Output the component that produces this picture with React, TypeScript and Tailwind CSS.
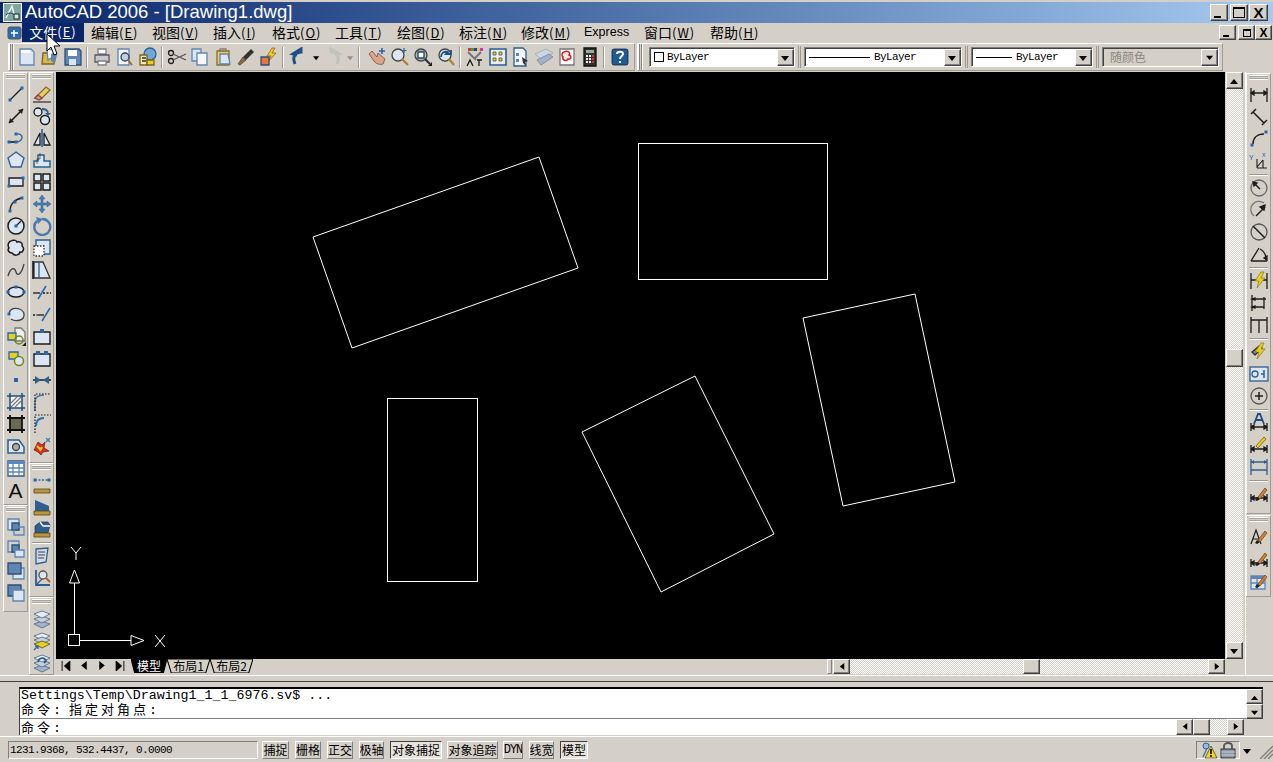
import React from "react";

const B = "#2a66a8", D = "#1c1c1c", S = "#5f86b3", L = "#dbe6f2", Y = "#e6cf1e", G = "#808080";

function I({ children, s = 20 }: { children: React.ReactNode; s?: number }) {
  return (
    <svg width={s} height={s} viewBox="0 0 20 20" fill="none" strokeWidth="1.3" stroke={D} className="block">
      {children}
    </svg>
  );
}
const N = ({ x, y, c = B }: { x: number; y: number; c?: string }) => <rect x={x - 1.5} y={y - 1.5} width="3" height="3" fill={c} stroke="none" />;
const Dim = () => <path d="M2 10v8M18 10v8M2 14h16M2 14l3-2v4zM18 14l-3-2v4z" fill={D} />;
const Brush = () => <g><path d="M9 13l7-9 2 2-7 9z" fill="#c8813a" stroke="#7a4a20" strokeWidth=".8" /><path d="M8 13l3 2-3 2-2-1z" fill={D} stroke="none" /></g>;
const Bolt = () => <path d="M12 1l-6 9h4l-2 7 8-10h-4l3-6z" fill={Y} stroke="#8a7a10" strokeWidth=".7" />;
const Stack = ({ y = 0 }: { y?: number }) => <g stroke="#5a6f8a" strokeWidth=".9"><path d={`M10 ${12 + y}l8 3-8 4-8-4z`} fill="#9fb4cc" /><path d={`M10 ${7 + y}l8 3-8 4-8-4z`} fill="#c3d0e0" /><path d={`M10 ${2 + y}l8 3-8 4-8-4z`} fill="#e6ecf4" /></g>;

const top1 = [
  <I><path d="M3 2h11l3 3v13H3z" fill={L} stroke={S} /><path d="M4 3h9v3H4z" fill="#fff" stroke="none" /></I>,
  <I><path d="M3 6h13l-2 11H2z" fill="#d9b64a" stroke="#7a6420" /><path d="M7 2l8 1-1 6-6 4z" fill="#fff" stroke={S} /><path d="M11 7l5-3 1 4-2 8-4-2z" fill={S} stroke="none" /></I>,
  <I><path d="M2 2h14l2 2v14H2z" fill={S} stroke="#2d4f78" /><path d="M5 3h9v6H5z" fill="#fff" stroke="none" /><path d="M6 12h7v6H6z" fill={L} stroke="none" /></I>,
];
const top2 = [
  <I><path d="M6 2h8v5H6z" fill="#fff" stroke={G} /><path d="M3 8h14v7H3z" fill="#c9c9cf" stroke="#5a5a60" /><path d="M6 14h8v4H6z" fill="#fff" stroke={G} /></I>,
  <I><path d="M3 2h11v16H3z" fill="#f2f5fa" stroke={S} /><circle cx="10" cy="10" r="4" fill="#bcd0e6" stroke="#345" /><path d="M13 13l4 5" strokeWidth="2" stroke="#a06a30" /></I>,
  <I><circle cx="12" cy="7" r="6" fill="#6fa8d8" stroke="#2d5f90" /><path d="M2 8h7v10H2z" fill="#f4e9a8" stroke="#7a6420" /><path d="M4 11h4M4 14h4" stroke="#333" /><path d="M9 13h7v5H9z" fill="#e6cf1e" stroke="#7a6420" /></I>,
];
const top3 = [
  <I><circle cx="4" cy="6" r="2.5" /><circle cx="4" cy="14" r="2.5" /><path d="M6 7l13 6M6 13l13-6" stroke="#555" /></I>,
  <I><path d="M2 2h9v12H2z" fill={L} stroke={S} /><path d="M7 6h10v12H7z" fill="#f4f8fc" stroke={S} /></I>,
  <I><path d="M7 2h6v3H7z" fill="#ddd" stroke={G} /><path d="M4 4h12v14H4z" fill="#e6cf6a" stroke="#8a6a20" /><path d="M7 7h8l2 10H7z" fill={L} stroke={S} /></I>,
  <I><path d="M15 2l3 3-8 8-3-3z" fill="#333" stroke="none" /><path d="M7 10l3 3-6 5-2-1z" fill="#8a6a4a" stroke="#442" strokeWidth=".7" /></I>,
  <I><path d="M13 1l-5 8h4l-3 6 8-9h-4l3-5z" fill={Y} stroke="#a05010" strokeWidth=".7" /><path d="M2 10h8v8H2z" fill="#e8763a" stroke="#2a4f80" /></I>,
];
const top4 = [
  <I><path d="M6 17C3 10 6 5 12 5V2l-8 5 4 1" fill="none" stroke="#1d4f86" strokeWidth="3" /></I>,
];
const top5 = [
  <I><path d="M14 17c3-7 0-12-6-12V2l8 5-4 1" fill="none" stroke="#c2c2bc" strokeWidth="3" /></I>,
];
const top6 = [
  <I><path d="M2 7l5 7c2 3 6 4 9 3l2-5-7-6-1 4-5-6z" fill="#d9a58c" stroke="#7a4a3a" strokeWidth=".8" /><path d="M15 1v6M12 4h6" stroke={B} strokeWidth="1.6" /></I>,
  <I><circle cx="8" cy="8" r="6" fill="#dbe6f2" stroke="#444" /><path d="M12 12l6 6" stroke="#b08030" strokeWidth="2.2" /><path d="M14 1v5M11.500 3.500h5" stroke={B} strokeWidth="1.2" /></I>,
  <I><circle cx="8" cy="8" r="6" fill="#9db8d6" stroke="#444" /><path d="M5 5h6v6H5z" fill="#fff" stroke="#345" /><path d="M12 12l5 5" stroke="#333" strokeWidth="2.2" /><path d="M19 19h-4l4-4z" fill={D} stroke="none" /></I>,
  <I><circle cx="9" cy="8" r="6" fill="#dbe6f2" stroke="#444" /><path d="M5 10c0-4 3-6 7-5l-2 2h5v-4" stroke="#1d4f86" strokeWidth="1.800" /><path d="M13 12l5 6" stroke="#b08030" strokeWidth="2.2" /></I>,
];
const top7 = [
  <I><path d="M3 1h3v3H3z" fill="#d33" stroke="none" /><path d="M6 1h3v3H6z" fill="#3a3" stroke="none" /><path d="M9 1h3v3H9z" fill="#33c" stroke="none" /><path d="M12 1h3v3h-3z" fill="#dc3" stroke="none" /><path d="M15 1h3v3h-3z" fill="#c3c" stroke="none" /><path d="M3 5l8 8M16 5l-7 7" stroke="#777" strokeWidth="2" /><path d="M2 19l3-6 3 6M12 13h5M14 13v6" strokeWidth="1.3" /></I>,
  <I><path d="M2 2h16v16H2z" fill="#e6edf5" stroke="#2d5f90" strokeWidth="1.6" /><path d="M5 5h3v3H5zM11 5h3v3h-3zM5 11h3v3H5zM11 11h3v3h-3z" fill="#e6cf1e" stroke="#444" strokeWidth=".7" /></I>,
  <I><path d="M3 1h9l3 3v15H3z" fill="#f2f6fb" stroke="#2d5f90" /><path d="M5 6h3v3H5zM5 12h3v3H5z" fill={S} stroke="none" /><path d="M11 10l6 4-3 1 1 4-3-3z" fill="#333" stroke="none" /></I>,
  <I><path d="M1 7l11-5 7 4-12 6z" fill="#cdd7e3" stroke="#8aa" strokeWidth=".7" /><path d="M3 13l12-6 4 3-12 8z" fill="#9fb4cc" stroke="#778" strokeWidth=".7" /></I>,
  <I><path d="M3 2h14v16H3z" fill="#fff" stroke="#777" /><path d="M7 5c4-2 7 1 5 3 3 1 2 5-1 4-2 3-6 1-5-2-2-1-1-5 1-5z" fill="#fbe8e4" stroke="#d02020" strokeWidth="1.500" /></I>,
  <I><path d="M4 1h12v18H4z" fill="#333" stroke="#111" /><path d="M6 3h8v3H6z" fill="#9a9" stroke="none" /><path d="M6 8h2v2H6zM9 8h2v2H9zM6 11h2v2H6zM9 11h2v2H9zM6 14h2v2H6zM9 14h2v2H9z" fill="#eee" stroke="none" /><path d="M12 8h2v2h-2zM12 11h2v2h-2zM12 14h2v2h-2z" fill="#d33" stroke="none" /></I>,
];
const help = <I><rect x="2" y="2" width="16" height="16" rx="2" fill="#1f5b96" stroke="#123" strokeWidth=".8" /><path d="M7 7c0-3 6-3 6 0 0 2-3 2-3 5" stroke="#fff" strokeWidth="2" /><rect x="9" y="14" width="2" height="2" fill="#fff" stroke="none" /></I>;

const col1 = [
  <I><path d="M4 16L16 4" /><N x={4} y={16} /><N x={16} y={4} /></I>,
  <I><path d="M3 17L17 3" strokeWidth="1.600" /><path d="M17 3l-5 1 4 4zM3 17l5-1-4-4z" fill={D} stroke="none" /></I>,
  <I><path d="M3 14h7c6 0 7-5 5-7s-4-1-5-1" stroke={B} /><path d="M3 14h7" /><N x={3} y={14} /><N x={10} y={14} /><N x={10} y={6} /></I>,
  <I><path d="M10 2l8 6-3 9H5L2 8z" fill={L} stroke="#2d5f90" /></I>,
  <I><path d="M3 6h14v8H3z" fill={L} stroke={D} /><N x={3} y={14} /><N x={17} y={6} /></I>,
  <I><path d="M4 17C4 10 9 5 16 4" /><N x={4} y={17} /><N x={9} y={8} /><N x={16} y={4} /></I>,
  <I><circle cx="10" cy="10" r="8" fill={L} strokeWidth="1.500" /><path d="M10 10l5-5" /><N x={10} y={10} /></I>,
  <I><path d="M5 3c3-2 6 0 6 1 3-1 6 1 5 4 3 2 1 7-2 6-1 4-6 4-8 1-3 0-5-3-3-5-2-3 0-7 2-7z" fill={L} strokeWidth="1.500" /></I>,
  <I><path d="M2 16C5 6 9 8 10 12s5 4 8-8" stroke="#444" /></I>,
  <I><ellipse cx="10" cy="10" rx="8" ry="5" fill={L} strokeWidth="1.500" /><N x={2} y={10} /><N x={18} y={10} /><N x={10} y={5} /></I>,
  <I><path d="M3 10c0-8 14-7 15 0s-9 8-13 5" fill={L} stroke="#444" /><N x={3} y={10} /></I>,
  <I><path d="M9 2h6l4 4v9H9z" fill="#eee" stroke="#777" /><path d="M2 7h8v7H2z" fill={Y} stroke={B} /><circle cx="13" cy="14" r="4" fill="none" stroke="#6a8a20" strokeWidth="1.500" /><path d="M20 20h-4l4-4z" fill={D} stroke="none" /></I>,
  <I><path d="M3 4h9v7H3z" fill={Y} stroke={B} /><circle cx="13" cy="13" r="4.500" fill={L} stroke="#6a8a20" strokeWidth="1.500" /></I>,
  <I><rect x="8" y="8" width="4" height="4" fill={B} stroke="none" /></I>,
  <I><path d="M4 4h12v12H4z" fill="#fff" stroke="none" /><path d="M5 15L15 5M5 11l6-6M9 15l6-6" stroke="#777" /><path d="M4 1v18M16 1v18M1 4h18M1 16h18" stroke="#1d4f86" strokeWidth="1.500" /></I>,
  <I><path d="M4 4h12v12H4z" fill="#6a6a50" stroke="none" /><path d="M4 1v18M16 1v18M1 4h18M1 16h18" stroke="#111" strokeWidth="1.800" /></I>,
  <I><path d="M2 4h11l5 7v6H2z" fill={L} stroke="#2d5f90" strokeWidth="1.500" /><circle cx="10" cy="11" r="3.500" fill="#aaa" stroke="#444" /></I>,
  <I><path d="M2 3h16v15H2z" fill="#fff" stroke="#2d5f90" /><path d="M2 3h16v3H2z" fill={S} stroke="none" /><path d="M2 10h16M2 14h16M7 6v12M13 6v12" stroke={S} /></I>,
  <span className="text-[21px] leading-none text-[#111] font-['Liberation_Sans',sans-serif]">A</span>,
];
const col1b = [
  <I><path d="M2 2h11v11H2z" fill={L} stroke={S} /><path d="M6 6h7v7H6z" fill={S} stroke="#2d4f78" /><path d="M8 10h10v8H8z" fill="none" stroke={S} /></I>,
  <I><path d="M2 2h11v11H2z" fill="none" stroke={S} /><path d="M6 6h7v7H6z" fill={S} stroke="#2d4f78" /><path d="M9 11h9v7H9z" fill={L} stroke={S} /></I>,
  <I><path d="M7 7h11v11H7z" fill={L} stroke={S} /><path d="M2 2h13v11H2z" fill={S} stroke="#2d4f78" /></I>,
  <I><path d="M2 2h13v11H2z" fill={S} stroke="#2d4f78" /><path d="M7 7h11v11H7z" fill={L} stroke={S} /></I>,
];
const col2 = [
  <I><path d="M3 14L14 3l4 3-9 9z" fill="#e6cf6a" stroke="#8a6a20" /><path d="M3 14l3-3 4 3-3 2z" fill="#d89a9a" stroke="#844" /><path d="M1 18h18" strokeWidth="1.100" /></I>,
  <I><circle cx="6" cy="6" r="4" fill={L} /><circle cx="13" cy="14" r="4.500" fill={L} strokeWidth="1.500" /><path d="M10 3c4 0 6 2 6 5" stroke="#2d5f90" strokeWidth="1.800" /><path d="M13 7h6l-3 3z" fill="#2d5f90" stroke="none" /></I>,
  <I><path d="M10 1v18" stroke="#2d5f90" strokeWidth="1.600" /><path d="M8 5v12H2zM12 5v12h6z" fill={L} /></I>,
  <I><path d="M2 17V11h4V5h6v6h6v6z" fill={L} stroke="#2d5f90" strokeWidth="1.500" /><path d="M5 14V9h3V3" stroke={D} strokeWidth=".6" /></I>,
  <I><path d="M2 2h7v7H2zM11 2h7v7h-7zM2 11h7v7H2zM11 11h7v7h-7z" fill={L} strokeWidth="1.500" /></I>,
  <I><path d="M10 1l3 4h-2v4h4V7l4 3-4 3v-2h-4v4h2l-3 4-3-4h2v-4H5v2l-4-3 4-3v2h4V5H7z" fill="#4a7ab0" stroke="#2d5f90" strokeWidth=".5" /></I>,
  <I><path d="M5 5a8 8 0 1 0 5-2" stroke="#4a7ab0" strokeWidth="2.400" /><path d="M4 1l7 2-5 5z" fill="#4a7ab0" stroke="none" /></I>,
  <I><path d="M4 2h14v14H4z" fill={L} stroke="#2d5f90" strokeWidth="1.400" /><path d="M2 8h10v10H2z" fill="#fff" stroke="#333" strokeDasharray="1.500 1.500" /></I>,
  <I><path d="M2 2h9l7 16H2z" fill={L} stroke="#333" strokeWidth="1.300" /><path d="M7 2v16" stroke="#2d5f90" /><path d="M1 1v18" stroke="#111" strokeWidth="1.500" /></I>,
  <I><path d="M1 11h7" stroke={D} /><path d="M11 11h8" stroke={D} strokeDasharray="2 1.500" /><path d="M6 17l8-13" stroke={B} strokeWidth="1.500" /></I>,
  <I><path d="M1 11h4" stroke={D} strokeDasharray="2 1.500" /><path d="M5 11h7" stroke={D} /><path d="M10 17l8-13" stroke={B} strokeWidth="1.500" /></I>,
  <I><path d="M2 6h16v12H2z" fill={L} strokeWidth="1.400" /><rect x="8" y="3" width="4" height="4" fill={B} stroke="none" /></I>,
  <I><path d="M2 6h16v12H2z" fill={L} strokeWidth="1.400" /><rect x="4" y="3" width="4" height="4" fill={B} stroke="none" /><rect x="12" y="3" width="4" height="4" fill={B} stroke="none" /></I>,
  <I><path d="M1 10h18" strokeWidth="1.500" /><path d="M9 10L3 6v8zM11 10l6-4v8z" fill="#2d5f90" stroke="none" /></I>,
  <I><path d="M3 19V10C3 5 6 3 12 3" stroke="#4a7ab0" strokeWidth="1.500" /><path d="M3 19V2h16" stroke={D} strokeWidth="1.200" strokeDasharray="1.500 1.500" /></I>,
  <I><path d="M4 12C4 7 7 4 12 4" stroke="#2a6fc0" strokeWidth="2" /><path d="M3 19V1h16" stroke={D} strokeWidth="1.200" strokeDasharray="1.500 1.500" /></I>,
  <I><path d="M2 14l4-8 4 3 3-3-1 6 5 3-6 1-2 3-3-3z" fill="#d83020" stroke="#601" strokeWidth=".6" /><path d="M5 10l3 3M8 15l2-4" stroke={Y} strokeWidth="2" /><path d="M14 6l4-4M14 2l4 4" stroke="#4a7ab0" /></I>,
];
const ruler = <path d="M2 14h16v4H2z" fill="#b8963a" stroke="#5a4510" strokeWidth=".8" />;
const col2c = [
  <I><path d="M3 5h14" stroke={B} strokeDasharray="2 1.500" /><N x={3} y={5} /><N x={17} y={5} />{ruler}</I>,
  <I><path d="M3 3l14 6v5H3z" fill="#2d5f90" stroke="none" />{ruler}</I>,
  <I><path d="M3 7l5-4h8l2 3-2 8H3z" fill="#2d5f90" stroke="#123" strokeWidth=".6" /><path d="M8 3l3 4h7" stroke="#fff" />{ruler}</I>,
];
const col2d = [
  <I><path d="M4 3l12-1-2 14-10 2z" fill="#cfdbe8" stroke="#2d5f90" /><path d="M6 6h7M6 9h7M6 12h6" stroke="#333" strokeWidth=".9" /></I>,
  <I><path d="M4 2v15h14" stroke="#2d5f90" strokeWidth="1.800" /><path d="M4 17l6-6" stroke="#2d5f90" /><circle cx="11" cy="7" r="4" fill={L} stroke="#555" /><path d="M14 10l4 4" stroke="#b06030" strokeWidth="2" /></I>,
];
const col2e = [
  <I><Stack /></I>,
  <I><path d="M10 2l8 3-8 4-8-4z" fill="#e6ecf4" stroke="#5a6f8a" strokeWidth=".9" /><path d="M10 6l8 3-8 4-8-4z" fill="#c3d0e0" stroke="#5a6f8a" strokeWidth=".9" /><path d="M10 10l8 3-8 4-8-4z" fill={Y} stroke="#6a5a10" strokeWidth=".9" /><path d="M2 19l4-4m-3 0h3v3" stroke={B} strokeWidth="1.300" /></I>,
  <I><Stack /><path d="M6 9c1-5 7-5 8-1l-2 2" stroke="#2d5f90" strokeWidth="1.800" /></I>,
];
const right1 = [
  <I><path d="M2 3v14M18 3v14M2 8h16" /><path d="M2 8l3-2v4zM18 8l-3-2v4z" fill={D} /></I>,
  <I><path d="M2 7l5-5M13 18l5-5M4 5l11 11" strokeWidth="1.500" /></I>,
  <I><path d="M4 15C4 9 8 5 15 5" strokeWidth="1.500" /><N x={3} y={16} /><N x={17} y={3} /></I>,
  <I><path d="M8 17V8M8 17h10M8 16l6-7M14 9v8" strokeWidth="1.100" /><text x="0" y="9" fontSize="7" fill={B} stroke="none" fontFamily="Liberation Sans">Y</text><text x="13" y="6" fontSize="7" fill={B} stroke="none" fontFamily="Liberation Sans">x</text></I>,
];
const right2 = [
  <I><circle cx="10" cy="10" r="8" stroke="#666" /><path d="M5 5l6 6" strokeWidth="1.500" /><path d="M4 4l4 1-3 3z" fill={D} /></I>,
  <I><path d="M5 16A8 8 0 0 1 15 3" stroke="#777" /><path d="M7 16l9-9" strokeWidth="1.500" /><path d="M16 5l-1 5-4-3z" fill={D} /></I>,
  <I><circle cx="10" cy="10" r="8" stroke="#555" /><path d="M4 4l12 12" strokeWidth="1.500" /></I>,
  <I><path d="M2 17h16M2 17L10 4" /><path d="M11 5a12 12 0 0 1 6 11" /><path d="M18 16l-3-2 3-2z" fill={D} /></I>,
];
const right3 = [
  <I><path d="M2 2v16M18 2v16M2 9h16" /><Bolt /></I>,
  <I><path d="M3 2v16M15 4v12M3 6h14M3 14h12" /><path d="M3 6l3-1v2zM3 14l3-1v2z" fill={D} /></I>,
  <I><path d="M2 5h16M2 2v16M10 5v13M18 2v16" /></I>,
];
const right4 = [
  <I><path d="M3 10l7-6 3 2-7 7z" fill="#888" stroke="#333" /><Bolt /></I>,
  <I><rect x="1" y="3" width="18" height="14" fill="#dbe6f2" stroke="#2d5f90" /><circle cx="6" cy="10" r="3" stroke="#2d5f90" /><path d="M12 10h3M15 6v8" stroke="#2d5f90" strokeWidth="1.500" /></I>,
  <I><circle cx="10" cy="10" r="8" stroke="#555" /><path d="M10 6v8M6 10h8" strokeWidth="1.500" /></I>,
];
const right5 = [
  <I><path d="M5 11L9 1h2l4 10M7 7h6" stroke="#1d4f86" strokeWidth="1.800" /><Dim /></I>,
  <I><path d="M7 11l8-9 2 2-8 9z" fill={Y} stroke="#7a5a10" strokeWidth=".8" /><Dim /></I>,
  <I><path d="M2 2v16M18 2v16M2 5h16M2 13h16" stroke="#2d5f90" /><path d="M2 5l3-2v4zM18 5l-3-2v4z" fill="#2d5f90" stroke="none" /></I>,
];

function Cell({ children }: { children: React.ReactNode }) {
  return <div className="flex h-[22px] w-full items-center justify-center">{children}</div>;
}
function Grip({ v }: { v?: boolean }) {
  return v ? (
    <div className="mr-[1px] h-full w-[5px] shrink-0 border-x border-x-white bg-[#d4d0c8] shadow-[inset_1px_0_0_#808080,inset_-1px_0_0_#808080]" />
  ) : (
    <div className="mx-[2px] h-[5px] shrink-0 border-y border-y-white shadow-[inset_0_1px_0_#a8a49c,inset_0_-1px_0_#a8a49c]" />
  );
}
const Sep = () => <div className="mx-[2px] my-[1.500px] h-[2px] shrink-0 border-t border-t-[#9c9890] border-b border-b-white" />;
const VSep = () => <div className="mx-[2px] h-[21px] w-[2px] shrink-0 border-l border-l-[#9c9890] border-r border-r-white" />;

function VBar({ className, children }: { className: string; children: React.ReactNode }) {
  return (
    <div className={`flex shrink-0 flex-col border border-l-white border-t-white border-r-[#a09c94] border-b-[#a09c94] ${className}`}>
      <div className="px-0 pb-[4px] pt-[1px]"><Grip /></div>
      {children}
    </div>
  );
}

function Tri({ d, s = 5 }: { d: "u" | "d" | "l" | "r"; s?: number }) {
  const p = { u: "0,8 8,8 4,3", d: "0,3 8,3 4,8", l: "7,0 7,8 2,4", r: "2,0 2,8 7,4" }[d];
  return (
    <svg width={s + 3} height={s + 3} viewBox="0 0 9 9" className="block">
      <polygon points={p} fill="#000" />
    </svg>
  );
}
function Btn({ className = "", children }: { className?: string; children?: React.ReactNode }) {
  return (
    <div className={`flex shrink-0 items-center justify-center border border-l-white border-t-white border-r-[#404040] border-b-[#404040] bg-[#d4d0c8] shadow-[inset_-1px_-1px_0_#808080] ${className}`}>
      {children}
    </div>
  );
}
const dith = "bg-[image:repeating-conic-gradient(#d4d0c8_0_25%,#ffffff_0_50%)] bg-[length:2px_2px]";

function Combo({ w, children, off }: { w: string; children: React.ReactNode; off?: boolean }) {
  return (
    <div className={`flex h-[20px] shrink-0 items-center border border-l-[#808080] border-t-[#808080] border-r-white border-b-white shadow-[inset_1px_1px_0_#404040] ${off ? "bg-[#d4d0c8]" : "bg-white"} ${w}`}>
      <div className="flex min-w-0 flex-1 items-center overflow-hidden pl-[4px]">{children}</div>
      <Btn className="h-[17px] w-[17px]"><Tri d="d" s={off ? 5 : 6} /></Btn>
    </div>
  );
}
const small = "font-['Liberation_Mono',monospace] text-[11px] tracking-[-0.6px] text-black";

const menus: [string, string, string][] = [
  ["编辑", "E", "w-[61px]"],
  ["视图", "V", "w-[61px]"],
  ["插入", "I", "w-[59px]"],
  ["格式", "O", "w-[63px]"],
  ["工具", "T", "w-[62px]"],
  ["绘图", "D", "w-[62px]"],
  ["标注", "N", "w-[62px]"],
  ["修改", "M", "w-[63px]"],
];
function Menu({ t, k, w }: { t: string; k: string; w: string }) {
  return (
    <div className={`shrink-0 whitespace-nowrap pb-[2px] text-[14px] leading-none text-black ${w}`}>
      {t}<span className="text-[13px] tracking-[1px]">(<span className="underline">{k}</span>)</span>
    </div>
  );
}
function Status({ t, w, on, cls = "" }: { t: string; w: string; on?: boolean; cls?: string }) {
  return (
    <div className={`flex h-[18px] shrink-0 items-center justify-center overflow-hidden whitespace-nowrap border text-[12px] leading-none text-black ${w} ${cls} ${on ? "border-l-[#404040] border-t-[#404040] border-r-white border-b-white bg-[#e6e3dc]" : "border-l-white border-t-white border-r-[#808080] border-b-[#808080]"}`}>
      {t}
    </div>
  );
}
function Tab({ t, on, w }: { t: string; on?: boolean; w: string }) {
  return (
    <div className={`relative flex h-[14px] shrink-0 items-center justify-center text-[12px] leading-none ${w} ${on ? "text-white" : "text-black"}`}>
      <svg viewBox="0 0 40 14" preserveAspectRatio="none" className="absolute inset-0 h-full w-full">
        <polygon points="0,0 40,0 36,14 4,14" fill={on ? "#000" : "#d4d0c8"} stroke="#000" strokeWidth="1" />
      </svg>
      <span className="relative">{t}</span>
    </div>
  );
}
const cjk = "inline-block font-['Noto_Sans_CJK_SC',sans-serif] text-[13px] leading-[13px] tracking-[3px]";

export default function App() {
  return (
    <div className="relative flex h-[762px] w-[1273px] flex-col overflow-hidden bg-[#d4d0c8] font-['Noto_Sans_CJK_SC','Liberation_Sans',sans-serif]">
      {/* Title bar */}
      <div className="h-[2px] shrink-0" />
      <div className="flex h-[21px] shrink-0 items-center bg-gradient-to-r from-[#0a246a] to-[#a6caf0] pl-[3px] pr-[5px]">
        <svg width="19" height="19" viewBox="0 0 19 19" className="mr-[3px] shrink-0">
          <rect x=".5" y=".5" width="18" height="18" fill="#7fa8a0" stroke="#fff" />
          <path d="M3 15L9 3l3 12" stroke="#fff" strokeWidth="1.300" fill="none" />
          <path d="M3 12c4-4 7-1 12 2" stroke="#1a4a40" fill="none" />
          <rect x="11" y="11" width="5" height="5" fill="#d8e8e0" stroke="#123" />
        </svg>
        <div className="flex-1 whitespace-nowrap font-['Liberation_Sans',sans-serif] text-[18.500px] leading-none text-white">AutoCAD 2006 - [Drawing1.dwg]</div>
        <Btn className="mr-[2px] h-[17px] w-[18px]"><div className="mt-[8px] h-[2px] w-[7px] -translate-x-[2px] bg-black" /></Btn>
        <Btn className="mr-[1px] h-[17px] w-[18px]"><div className="h-[11px] w-[12px] border border-t-2 border-black" /></Btn>
        <Btn className="h-[17px] w-[19px] font-['Liberation_Sans',sans-serif] text-[15px] font-bold leading-none text-black">X</Btn>
      </div>
      {/* Menu */}
      <div className="flex h-[19px] shrink-0 items-center">
        <svg width="16" height="16" viewBox="0 0 16 16" className="ml-[7px] mr-[-1px] shrink-0">
          <rect x="1" y="2" width="13" height="12" rx="2" fill="#2b6cb0" stroke="#555" />
          <path d="M7 5v7M4 8h7" stroke="#fff" strokeWidth="1.500" />
        </svg>
        <div className="mr-[7px] flex h-[19px] w-[62px] shrink-0 items-center justify-center whitespace-nowrap bg-[#0a246a] pb-[2px] text-[14px] leading-none text-white">
          文件<span className="text-[13px] tracking-[1px]">(<span className="underline">E</span>)</span>
        </div>
        {menus.map((m) => <Menu key={m[0]} t={m[0]} k={m[1]} w={m[2]} />)}
        <div className="w-[60px] shrink-0 pb-[1px] font-['Liberation_Sans',sans-serif] text-[12.500px] leading-none text-black">Express</div>
        <Menu t="窗口" k="W" w="w-[66px]" />
        <Menu t="帮助" k="H" w="w-[60px]" />
        <div className="flex-1" />
        <Btn className="mr-[2px] h-[15px] w-[17px]"><div className="mt-[7px] h-[2px] w-[6px] -translate-x-[2px] bg-black" /></Btn>
        <Btn className="h-[15px] w-[17px]"><div className="h-[8px] w-[8px] border border-t-2 border-black" /></Btn>
        <Btn className="mr-[1px] h-[15px] w-[17px] font-['Liberation_Sans',sans-serif] text-[12px] font-bold leading-none text-black">X</Btn>
      </div>
      {/* Toolbars */}
      <div className="flex h-[30px] shrink-0 items-center pl-[8px]">
        <div className="flex h-[28px] w-[627px] shrink-0 items-center border border-l-white border-t-white border-r-[#a09c94] border-b-[#a09c94]">
          <Grip v />
          {top1.map((x, i) => <div key={i} className="flex w-[23px] justify-center">{x}</div>)}
          <VSep />
          {top2.map((x, i) => <div key={i} className="flex w-[23px] justify-center">{x}</div>)}
          <VSep />
          {top3.map((x, i) => <div key={i} className="flex w-[23px] justify-center">{x}</div>)}
          <VSep />
          <div className="w-[1px]" />
          {top4.map((x, i) => <div key={i} className="flex w-[23px] justify-center">{x}</div>)}
          <div className="flex w-[12px] justify-center"><Tri d="d" s={4} /></div>
          {top5.map((x, i) => <div key={i} className="flex w-[22px] justify-center">{x}</div>)}
          <div className="flex w-[12px] justify-center opacity-30"><Tri d="d" s={4} /></div>
          <VSep />
          <div className="w-[3px]" />
          {top6.map((x, i) => <div key={i} className="flex w-[23px] justify-center">{x}</div>)}
          <VSep />
          {top7.map((x, i) => <div key={i} className="flex w-[23px] justify-center">{x}</div>)}
          <VSep />
          <div className="flex w-[26px] justify-center">{help}</div>
        </div>
        <div className="ml-[2px] flex h-[28px] w-[586px] shrink-0 items-center border border-l-white border-t-white border-r-[#a09c94] border-b-[#a09c94]">
          <Grip v />
          <div className="w-[5px]" />
          <Combo w="w-[146px]">
            <div className="mr-[3px] h-[10px] w-[10px] shrink-0 border border-black bg-white" />
            <span className={small}>ByLayer</span>
          </Combo>
          <div className="mx-[3px] h-[22px] w-[3px] shrink-0 border-x border-x-[#9c9890]" />
          <Combo w="w-[158px]">
            <div className="mr-[4px] h-[1px] w-[61px] shrink-0 bg-black" />
            <span className={small}>ByLayer</span>
          </Combo>
          <div className="mx-[3px] h-[22px] w-[3px] shrink-0 border-x border-x-[#9c9890]" />
          <Combo w="w-[122px]">
            <div className="mr-[4px] h-[1px] w-[36px] shrink-0 bg-black" />
            <span className={small}>ByLayer</span>
          </Combo>
          <div className="mx-[3px] h-[22px] w-[3px] shrink-0 border-x border-x-[#9c9890]" />
          <Combo w="w-[117px]" off>
            <span className="pl-[3px] text-[12px] leading-none text-[#8a8880]">随颜色</span>
          </Combo>
        </div>
      </div>
      {/* Main */}
      <div className="flex h-[603px] shrink-0">
        <div className="flex w-[56px] shrink-0 pl-[3px]">
          <div className="flex w-[26px] shrink-0 flex-col">
            <VBar className="h-[433px] w-[25px]">{col1.map((x, i) => <Cell key={i}>{x}</Cell>)}</VBar>
            <VBar className="h-[107px] w-[25px]">{col1b.map((x, i) => <Cell key={i}>{x}</Cell>)}</VBar>
          </div>
          <div className="flex w-[26px] shrink-0 flex-col">
            <VBar className="h-[391px] w-[25px]">{col2.map((x, i) => <Cell key={i}>{x}</Cell>)}</VBar>
            <VBar className="h-[134px] w-[25px]">
              {col2c.map((x, i) => <Cell key={i}>{x}</Cell>)}
              <Sep />
              {col2d.map((x, i) => <Cell key={i}>{x}</Cell>)}
            </VBar>
            <VBar className="h-[78px] w-[25px]">{col2e.map((x, i) => <Cell key={i}>{x}</Cell>)}</VBar>
          </div>
        </div>
        <div className="flex w-[1189px] shrink-0 flex-col">
          <div className="flex h-[587px] shrink-0">
            <div className="relative h-[587px] w-[1169px] shrink-0 bg-black">
              <svg width="1169" height="587" viewBox="56 72 1169 587" fill="none" stroke="#fff" strokeWidth="1" className="absolute inset-0">
                <polygon points="313,237 539,157 578,268 352,348" />
                <rect x="638.500" y="143.500" width="189" height="136" />
                <polygon points="803,318 915,294 955,482 843,506" />
                <polygon points="582,432 695,376 774,534 661,592" />
                <rect x="387.500" y="398.500" width="90" height="183" />
                <rect x="68.500" y="634.500" width="11" height="11" />
                <path d="M74.500 583v51M80 640.500h51" />
                <polygon points="74.500,570 69.500,583 79.500,583" />
                <polygon points="144,640.500 131,635.500 131,645.500" />
                <path d="M71 547l5 6 5-6M76 553v7M155 635l10 12M165 635l-10 12" />
              </svg>
            </div>
            <div className={`ml-[1px] flex w-[17px] shrink-0 flex-col ${dith}`}>
              <Btn className="h-[17px] w-[17px]"><Tri d="u" s={6} /></Btn>
              <div className="h-[260px]" />
              <Btn className="h-[18px] w-[17px]" />
              <div className="flex-1" />
              <Btn className="h-[17px] w-[17px]"><Tri d="d" s={6} /></Btn>
            </div>
          </div>
          <div className="flex h-[15px] shrink-0 items-start">
            <div className="ml-[1px] mr-[2px] flex">
              {[0, 1, 2, 3].map((i) => (
                <div key={i} className="flex h-[14px] w-[18px] items-center justify-center">
                  {i === 0 && <svg width="10" height="10" viewBox="0 0 9 9"><path d="M1 0v9M8 0v9L3 4.500z" fill="#000" stroke="#000" strokeWidth=".8" /></svg>}
                  {i === 1 && <Tri d="l" s={7} />}
                  {i === 2 && <Tri d="r" s={7} />}
                  {i === 3 && <svg width="10" height="10" viewBox="0 0 9 9"><path d="M8 0v9M1 0v9L6 4.500z" fill="#000" stroke="#000" strokeWidth=".8" /></svg>}
                </div>
              ))}
            </div>
            <Tab t="模型" on w="w-[36px]" />
            <Tab t="布局1" w="w-[43px]" />
            <Tab t="布局2" w="w-[43px]" />
            <div className="flex-1" />
            <div className="mr-[1px] h-[15px] w-[5px] shrink-0 border border-l-white border-t-white border-r-[#808080] border-b-[#808080]" />
            <div className={`flex h-[15px] w-[392px] shrink-0 ${dith}`}>
              <Btn className="h-[15px] w-[17px]"><Tri d="l" /></Btn>
              <div className="w-[173px]" />
              <Btn className="h-[15px] w-[17px]" />
              <div className="flex-1" />
              <Btn className="h-[15px] w-[17px]"><Tri d="r" /></Btn>
            </div>
            <div className="w-[20px]" />
          </div>
        </div>
        <div className="flex w-[27px] shrink-0 flex-col border-l border-l-white pt-[1px]">
          <VBar className="h-[441px] w-[25px]">
            {right1.map((x, i) => <Cell key={i}>{x}</Cell>)}
            <Sep />
            {right2.map((x, i) => <Cell key={i}>{x}</Cell>)}
            <Sep />
            {right3.map((x, i) => <Cell key={i}>{x}</Cell>)}
            <Sep />
            {right4.map((x, i) => <Cell key={i}>{x}</Cell>)}
            <Sep />
            {right5.map((x, i) => <Cell key={i}>{x}</Cell>)}
            <Sep />
            <Cell><I><Dim /><Brush /></I></Cell>
          </VBar>
          <div className="h-[1px]" />
          <VBar className="h-[82px] w-[25px]">
            <Cell><I><path d="M2 17L7 3l5 14M4 12h6" strokeWidth="1.200" /><Brush /></I></Cell>
            <Cell><I><Dim /><Brush /></I></Cell>
            <Cell><I><path d="M2 5h14v13H2z" fill={L} stroke={S} /><path d="M2 5h14v3H2z" fill={S} stroke="none" /><path d="M2 12h14M8 8v10" stroke={S} /><Brush /></I></Cell>
          </VBar>
        </div>
      </div>
      <div className="h-[1px] shrink-0 bg-white" />
      <div className="h-[5px] shrink-0" />
      <div className="h-[1px] shrink-0 bg-[#404040]" />
      <div className="h-[5px] shrink-0" />
      {/* Command window */}
      <div className="ml-[19px] flex h-[48px] w-[1244px] shrink-0 flex-col border-l border-t-2 border-l-[#404040] border-t-black bg-white font-['Liberation_Mono','Noto_Sans_CJK_SC',monospace]">
        <div className="flex h-[30px] shrink-0 border-b border-b-[#808080]">
          <div className="flex-1 pl-[1px] text-[13.300px] leading-[13px] text-black">
            <div className="h-[13px] whitespace-pre">Settings\Temp\Drawing1_1_1_6976.sv$ ...</div>
            <div className="h-[13px] whitespace-pre"><span className={cjk}>命令</span>: <span className={cjk}>指定对角点</span>:</div>
          </div>
          <div className="flex w-[17px] shrink-0 flex-col">
            <Btn className="h-[15px] w-[17px]"><Tri d="u" /></Btn>
            <Btn className="h-[15px] w-[17px]"><Tri d="d" /></Btn>
          </div>
        </div>
        <div className="flex h-[16px] shrink-0 items-center">
          <div className="flex-1 whitespace-pre pl-[1px] text-[13.300px] leading-[13px] text-black"><span className={cjk}>命令</span>:</div>
          <div className={`flex h-[16px] w-[68px] shrink-0 ${dith}`}>
            <Btn className="h-[16px] w-[17px]"><Tri d="l" /></Btn>
            <Btn className="h-[16px] w-[17px]" />
            <div className="flex-1" />
            <Btn className="h-[16px] w-[17px]"><Tri d="r" /></Btn>
          </div>
          <div className="w-[19px] self-stretch bg-[#d4d0c8]" />
        </div>
      </div>
      <div className="mt-[1px] h-[1px] shrink-0 bg-white" />
      <div className="h-[4px] shrink-0" />
      {/* Status */}
      <div className="flex h-[18px] shrink-0 items-center pl-[8px]">
        <div className={`mr-[4px] flex h-[18px] w-[250px] shrink-0 items-center border border-l-[#808080] border-t-[#808080] border-r-white border-b-white pl-[1px] ${small}`}>1231.9368, 532.4437, 0.0000</div>
        <Status t="捕捉" w="w-[27px]" />
        <div className="w-[6px]" />
        <Status t="栅格" w="w-[26px]" />
        <div className="w-[6px]" />
        <Status t="正交" w="w-[26px]" />
        <div className="w-[6px]" />
        <Status t="极轴" w="w-[25px]" />
        <div className="w-[6px]" />
        <Status t="对象捕捉" w="w-[52px]" on />
        <div className="w-[5px]" />
        <Status t="对象追踪" w="w-[51px]" />
        <div className="w-[5px]" />
        <Status t="DYN" w="w-[20px]" cls="font-['Liberation_Mono',monospace] text-[10px] tracking-[-1px]" />
        <div className="w-[6px]" />
        <Status t="线宽" w="w-[25px]" />
        <div className="w-[6px]" />
        <Status t="模型" w="w-[28px]" on />
        <div className="flex-1" />
        <div className="flex h-[18px] w-[44px] shrink-0 items-center justify-center gap-[2px] border border-l-[#808080] border-t-[#808080] border-r-white border-b-white">
          <svg width="18" height="17" viewBox="0 0 18 17">
            <path d="M3 15L9 2" stroke="#4a7ab0" strokeWidth="1.500" /><circle cx="6" cy="4" r="3" fill="#9db8d6" stroke="#2d5f90" />
            <path d="M11 4l6 12H5z" fill="#f2d820" stroke="#333" strokeWidth=".7" /><path d="M11 7v5M11 13v2" stroke="#000" strokeWidth="1.600" />
          </svg>
          <svg width="16" height="17" viewBox="0 0 16 17">
            <path d="M4 7V4c0-4 8-4 8 0v3" stroke="#555" strokeWidth="1.800" fill="none" />
            <rect x="1" y="7" width="14" height="9" fill="#8d97a5" stroke="#333" /><path d="M1 10h14M1 13h14" stroke="#ccd" />
          </svg>
        </div>
        <div className="ml-[3px] mr-[1px] w-[15px]"><Tri d="d" s={6} /></div>
        <svg width="14" height="14" viewBox="0 0 14 14" className="mb-[-4px] shrink-0">
          <path d="M1 14L14 1M5 14L14 5M9 14L14 9" stroke="#808080" strokeWidth="1.300" />
        </svg>
      </div>
      {/* Cursor */}
      <svg width="16" height="24" viewBox="0 0 16 24" className="absolute left-[46px] top-[33px]">
        <path d="M1 1v17l4-4 3 8 3-1-3-8h6z" fill="#fff" stroke="#000" />
      </svg>
    </div>
  );
}
